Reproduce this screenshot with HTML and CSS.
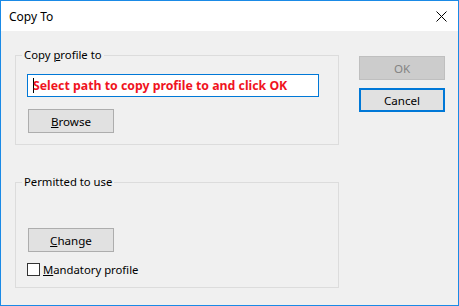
FILE: index.html
```html
<!DOCTYPE html>
<html lang="en">
<head>
    <meta charset="UTF-8">
    <title>Copy To</title>
    <link rel="stylesheet" href="styles.css">
</head>
<body>
    <div class="window">
        <div class="titlebar">
            <span class="title">Copy To</span>
            <svg class="close" width="11" height="11" viewBox="0 0 11 11">
                <path d="M0.5 0.5 L10.5 10.5 M10.5 0.5 L0.5 10.5" stroke="#000" stroke-width="1" fill="none"/>
            </svg>
        </div>
        <div class="content">
            <div class="groups">
                <fieldset class="group group-copy">
                    <legend>Copy <u>p</u>rofile to</legend>
                    <div class="path-box">
                        <span class="caret"></span>
                        <span class="path-text">Select path to copy profile to and click OK</span>
                    </div>
                    <button class="btn btn-browse" type="button"><u>B</u>rowse</button>
                </fieldset>

                <fieldset class="group group-permit">
                    <legend>Permitted to use</legend>
                    <button class="btn btn-change" type="button"><u>C</u>hange</button>
                    <label class="check-row">
                        <span class="checkbox"></span>
                        <span><u>M</u>andatory profile</span>
                    </label>
                </fieldset>
            </div>
            <div class="actions">
                <button class="btn btn-disabled" type="button">OK</button>
                <button class="btn btn-default" type="button">Cancel</button>
            </div>
        </div>
    </div>
</body>
</html>
```

FILE: styles.css
```css
body {
    margin: 0;
    padding: 0;
    font-family: "Noto Sans", "Open Sans", sans-serif;
    font-size: 11.3px;
    color: #000;
}

.window {
    width: 459px;
    height: 306px;
    box-sizing: border-box;
    border: 1px solid #1a8ae6;
    background: #f0f0f0;
}

.titlebar {
    height: 30px;
    background: #fff;
    display: flex;
    align-items: center;
    justify-content: space-between;
    padding: 0 11px 0 8px;
}

.title {
    font-size: 12px;
}

.content {
    display: flex;
    gap: 20px;
    padding: 16px 0 0 14px;
}

.groups {
    width: 324px;
    display: flex;
    flex-direction: column;
    gap: 29px;
}

.group {
    margin: 0;
    border: 1px solid #dcdcdc;
    padding: 0 11px;
    box-sizing: border-box;
    display: flex;
    flex-direction: column;
    align-items: flex-start;
}

.group legend {
    padding: 0 2px;
    margin-left: -5px;
    line-height: 16px;
}

.group-copy {
    height: 98px;
}

.group-permit {
    height: 114px;
}

.path-box {
    margin-top: 11px;
    width: 292px;
    height: 23px;
    box-sizing: border-box;
    border: 1px solid #0078d7;
    background: #fff;
    display: flex;
    align-items: center;
    padding-left: 5px;
}

.caret {
    width: 1px;
    height: 15px;
    background: #000;
    margin-right: -1px;
}

.path-text {
    color: #f0141e;
    font-weight: bold;
    font-size: 12.3px;
    white-space: nowrap;
}

.btn {
    font-family: inherit;
    font-size: 11.6px;
    color: #000;
    width: 86px;
    height: 24px;
    box-sizing: border-box;
    border: 1px solid #adadad;
    background: #e1e1e1;
    padding: 0;
}

.btn-browse {
    margin: 12px 0 0 1px;
}

.btn-change {
    margin: 38px 0 0 1px;
}

.check-row {
    display: flex;
    align-items: center;
    gap: 3px;
    margin-top: 10px;
}

.checkbox {
    width: 13px;
    height: 13px;
    box-sizing: border-box;
    border: 1px solid #333;
    background: #fff;
}

.actions {
    display: flex;
    flex-direction: column;
    gap: 8px;
    padding-top: 9px;
}

.btn-disabled {
    background: #cccccc;
    border-color: #bfbfbf;
    color: #838383;
}

.btn-default {
    border: 2px solid #0078d7;
}
```
